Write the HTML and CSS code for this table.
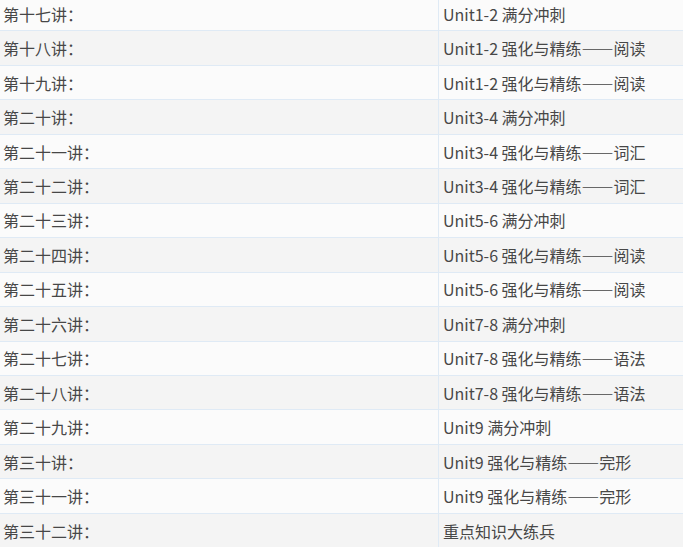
FILE: index.html
```html
<!DOCTYPE html>
<html lang="zh-CN">
<head>
<meta charset="utf-8">
<title>课程列表</title>
<link rel="stylesheet" href="styles.css">
</head>
<body>
<div class="list">
  <div class="row"><div class="c1">第十七讲：</div><div class="c2">Unit1-2 满分冲刺</div></div>
  <div class="row"><div class="c1">第十八讲：</div><div class="c2">Unit1-2 强化与精练——阅读</div></div>
  <div class="row"><div class="c1">第十九讲：</div><div class="c2">Unit1-2 强化与精练——阅读</div></div>
  <div class="row"><div class="c1">第二十讲：</div><div class="c2">Unit3-4 满分冲刺</div></div>
  <div class="row"><div class="c1">第二十一讲：</div><div class="c2">Unit3-4 强化与精练——词汇</div></div>
  <div class="row"><div class="c1">第二十二讲：</div><div class="c2">Unit3-4 强化与精练——词汇</div></div>
  <div class="row"><div class="c1">第二十三讲：</div><div class="c2">Unit5-6 满分冲刺</div></div>
  <div class="row"><div class="c1">第二十四讲：</div><div class="c2">Unit5-6 强化与精练——阅读</div></div>
  <div class="row"><div class="c1">第二十五讲：</div><div class="c2">Unit5-6 强化与精练——阅读</div></div>
  <div class="row"><div class="c1">第二十六讲：</div><div class="c2">Unit7-8 满分冲刺</div></div>
  <div class="row"><div class="c1">第二十七讲：</div><div class="c2">Unit7-8 强化与精练——语法</div></div>
  <div class="row"><div class="c1">第二十八讲：</div><div class="c2">Unit7-8 强化与精练——语法</div></div>
  <div class="row"><div class="c1">第二十九讲：</div><div class="c2">Unit9 满分冲刺</div></div>
  <div class="row"><div class="c1">第三十讲：</div><div class="c2">Unit9 强化与精练——完形</div></div>
  <div class="row"><div class="c1">第三十一讲：</div><div class="c2">Unit9 强化与精练——完形</div></div>
  <div class="row"><div class="c1">第三十二讲：</div><div class="c2">重点知识大练兵</div></div>
</div>
</body>
</html>
```
FILE: styles.css
```css
html, body {
  margin: 0;
  padding: 0;
  background: #fbfbfb;
  overflow: hidden;
}
.list {
  margin-top: -3px;
  font-family: "Noto Sans CJK SC", "Noto Sans", sans-serif;
  font-size: 16px;
  color: #474747;
}
.row {
  display: grid;
  grid-template-columns: 439px 1fr;
  height: 34.46px;
  box-sizing: border-box;
  border-bottom: 1px solid #dfeaf5;
  background: #fbfbfb;
}
.row:nth-child(even) {
  background: #f4f4f4;
}
.c1, .c2 {
  display: flex;
  align-items: center;
  white-space: nowrap;
}
.c1 {
  padding-left: 3px;
  border-right: 1px solid #dfeaf5;
}
.c2 {
  padding-left: 4px;
}
```
